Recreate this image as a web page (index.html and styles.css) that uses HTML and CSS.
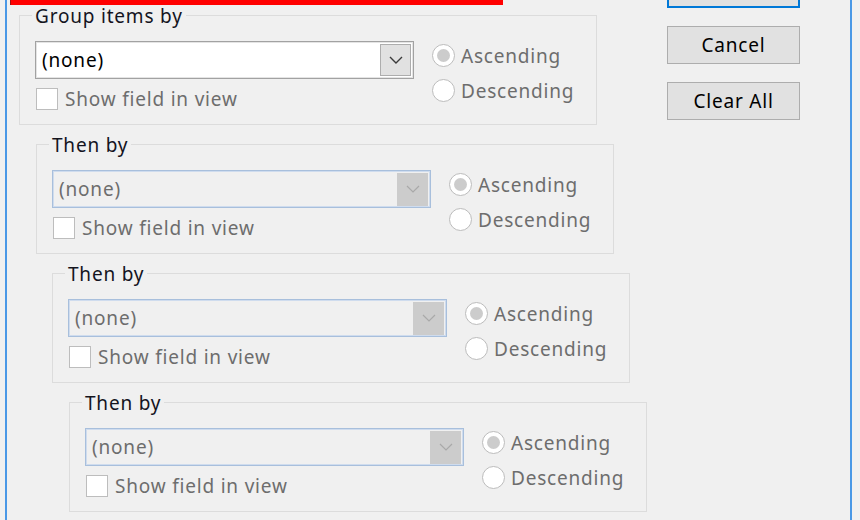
FILE: index.html
```html
<!DOCTYPE html>
<html lang="en">
<head>
<meta charset="utf-8">
<title>Group By</title>
<link rel="stylesheet" href="styles.css">
</head>
<body>
<div class="window">
  <div class="content">
    <div class="left">
      <div class="redbar"></div>
      <div class="groups">
        <div class="group lvl0">
          <span class="group-title">Group items by</span>
          <div class="group-body">
            <div class="field">
              <div class="combo enabled">
                <span class="combo-text">(none)</span>
                <span class="combo-btn"><svg viewBox="0 0 14 8" width="14" height="8"><path d="M1 1 L7 7 L13 1" fill="none" stroke="currentColor" stroke-width="1.4"/></svg></span>
              </div>
              <div class="check"><span class="box"></span><span class="dim">Show field in view</span></div>
            </div>
            <div class="radios">
              <div class="radio"><span class="circle on"></span><span class="dim">Ascending</span></div>
              <div class="radio"><span class="circle"></span><span class="dim">Descending</span></div>
            </div>
          </div>
        </div>
        <div class="group lvl1">
          <span class="group-title">Then by</span>
          <div class="group-body">
            <div class="field">
              <div class="combo disabled">
                <span class="combo-text">(none)</span>
                <span class="combo-btn"><svg viewBox="0 0 14 8" width="14" height="8"><path d="M1 1 L7 7 L13 1" fill="none" stroke="currentColor" stroke-width="1.2"/></svg></span>
              </div>
              <div class="check"><span class="box"></span><span class="dim">Show field in view</span></div>
            </div>
            <div class="radios">
              <div class="radio"><span class="circle on"></span><span class="dim">Ascending</span></div>
              <div class="radio"><span class="circle"></span><span class="dim">Descending</span></div>
            </div>
          </div>
        </div>
        <div class="group lvl2">
          <span class="group-title">Then by</span>
          <div class="group-body">
            <div class="field">
              <div class="combo disabled">
                <span class="combo-text">(none)</span>
                <span class="combo-btn"><svg viewBox="0 0 14 8" width="14" height="8"><path d="M1 1 L7 7 L13 1" fill="none" stroke="currentColor" stroke-width="1.2"/></svg></span>
              </div>
              <div class="check"><span class="box"></span><span class="dim">Show field in view</span></div>
            </div>
            <div class="radios">
              <div class="radio"><span class="circle on"></span><span class="dim">Ascending</span></div>
              <div class="radio"><span class="circle"></span><span class="dim">Descending</span></div>
            </div>
          </div>
        </div>
        <div class="group lvl3">
          <span class="group-title">Then by</span>
          <div class="group-body">
            <div class="field">
              <div class="combo disabled">
                <span class="combo-text">(none)</span>
                <span class="combo-btn"><svg viewBox="0 0 14 8" width="14" height="8"><path d="M1 1 L7 7 L13 1" fill="none" stroke="currentColor" stroke-width="1.2"/></svg></span>
              </div>
              <div class="check"><span class="box"></span><span class="dim">Show field in view</span></div>
            </div>
            <div class="radios">
              <div class="radio"><span class="circle on"></span><span class="dim">Ascending</span></div>
              <div class="radio"><span class="circle"></span><span class="dim">Descending</span></div>
            </div>
          </div>
        </div>
      </div>
    </div>
    <div class="buttons">
      <button class="btn default" aria-label="OK"></button>
      <button class="btn">Cancel</button>
      <button class="btn">Clear All</button>
    </div>
  </div>
</div>
</body>
</html>
```

FILE: styles.css
```css
html, body {
  margin: 0;
  padding: 0;
  background: #f0f0f0;
  font-family: "Noto Sans", "Open Sans", sans-serif;
  font-size: 19px;
  letter-spacing: 0.8px;
  color: #000;
  overflow: hidden;
}

.window {
  margin-left: 5px;
  width: 843px;
  height: 520px;
  border-left: 2px solid #4a98e6;
  border-right: 2px solid #4a98e6;
  background: #f0f0f0;
  overflow: hidden;
}

.content {
  display: flex;
}

.left {
  width: 648px;
  flex: none;
}

.redbar {
  margin-left: 4px;
  width: 492px;
  height: 5px;
  background: #ff0000;
  box-shadow: -1px 0 0 #a01010;
}

.groups {
  margin-top: 10px;
  margin-left: 12px;
  display: flex;
  flex-direction: column;
  gap: 19px;
}

.group {
  position: relative;
  box-sizing: border-box;
  width: 578px;
  height: 110px;
  border: 1px solid #dcdcdc;
  padding: 25px 0 0 15px;
}

.lvl1 { margin-left: 17px; }
.lvl2 { margin-left: 33px; }
.lvl3 { margin-left: 50px; }

.group-title {
  position: absolute;
  top: -11px;
  left: 12px;
  padding: 0 3px;
  line-height: 22px;
  background: #f0f0f0;
  color: #14141e;
}

.group-body {
  display: flex;
  gap: 18px;
}

.field {
  display: flex;
  flex-direction: column;
  gap: 8px;
}

.combo {
  box-sizing: border-box;
  width: 379px;
  height: 38px;
  display: flex;
  align-items: center;
  justify-content: space-between;
  padding: 0 2px 0 6px;
}

.combo.enabled {
  background: #fff;
  border: 1px solid #a2a2a2;
  box-shadow: inset 0 0 0 1px #e4e4e4;
}

.combo.disabled {
  background: #f0f0f0;
  border: 1px solid #a8bfdc;
  box-shadow: inset 0 0 0 1px #cfdcee;
  color: #6d6d6d;
}

.combo-text {
  line-height: 22px;
}

.combo-btn {
  box-sizing: border-box;
  width: 31px;
  height: 32px;
  display: flex;
  align-items: center;
  justify-content: center;
}

.enabled .combo-btn {
  background: #e1e1e1;
  border: 1px solid #adadad;
  color: #3a3a3a;
}

.disabled .combo-btn {
  background: #cccccc;
  color: #a9a9a9;
  height: 33px;
}

.check {
  display: flex;
  align-items: center;
  gap: 7px;
  height: 23px;
  margin-left: 1px;
}

.box {
  box-sizing: border-box;
  width: 22px;
  height: 22px;
  background: #fff;
  border: 1px solid #bdbdbd;
}

.dim {
  color: #6d6d6d;
  line-height: 22px;
}

.radios {
  display: flex;
  flex-direction: column;
  gap: 12px;
  padding-top: 3px;
}

.radio {
  display: flex;
  align-items: center;
  gap: 6px;
  height: 23px;
}

.circle {
  box-sizing: border-box;
  width: 23px;
  height: 23px;
  border-radius: 50%;
  border: 1px solid #bcbcbc;
  background: #fff;
  display: flex;
  align-items: center;
  justify-content: center;
}

.circle.on::after {
  content: "";
  width: 13px;
  height: 13px;
  border-radius: 50%;
  background: #cccccc;
}

.buttons {
  margin-top: -30px;
  margin-left: 12px;
  display: flex;
  flex-direction: column;
  gap: 18px;
}

.btn {
  box-sizing: border-box;
  width: 133px;
  height: 38px;
  background: #e1e1e1;
  border: 1px solid #adadad;
  font-family: inherit;
  font-size: 19px;
  letter-spacing: 0.8px;
  color: #000;
  padding: 0;
}

.btn.default {
  border: 2px solid #0078d7;
}
```
